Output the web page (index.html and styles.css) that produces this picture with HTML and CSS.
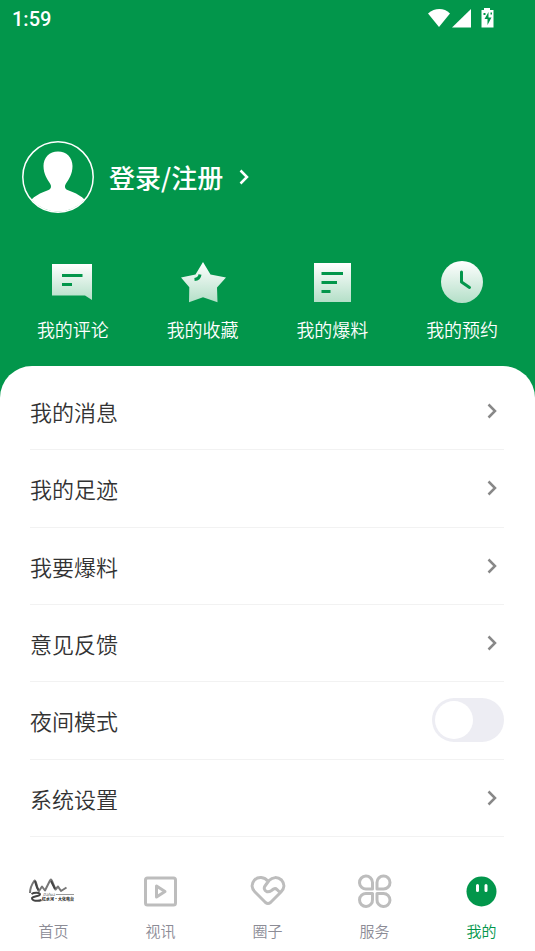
FILE: index.html
```html
<!DOCTYPE html>
<html lang="zh-CN">
<head>
<meta charset="utf-8">
<meta name="viewport" content="width=device-width, initial-scale=1">
<title>我的</title>
<link rel="stylesheet" href="styles.css">
</head>
<body>
<header class="hero">
  <div class="status">
    <time class="clock">1:59</time>
    <svg class="signals" viewBox="0 0 68 22" aria-hidden="true">
      <path d="M0 5.500C7-.4 16-.4 22 5.500L11 19z"/>
      <path d="M43 1V19.500H24z"/>
      <path d="M56 0h6v2h3.500v17.500h-12V2h2.500z"/>
      <path class="bolt" d="M60.500 4l-4 7h3v6l4-7.500h-3zM55.500 5h2v2h-2zM62.500 4.500h1.500v2h-1.500z"/>
    </svg>
  </div>
  <a class="profile" href="#login">
    <svg class="avatar" viewBox="0 0 72 72" aria-hidden="true">
      <circle class="ring" cx="36" cy="36" r="35.200"/>
      <path d="M36 10.500c8.500 0 14.500 6 14.500 14.500 0 8-3.500 13-6.500 17.500-1.500 2.500-1.500 5 1.500 6.500l5 2c5 2 9 4.500 12 7.500A35 35 0 0 1 9.500 58.500c3-3 7-5.500 12-7.500l5-2c3-1.500 3-4 1.500-6.500-3-4.500-6.500-9.500-6.500-17.500 0-8.500 6-14.500 14.500-14.500z"/>
    </svg>
    <span class="login">登录/注册</span>
    <svg class="chevron" viewBox="0 0 10 16" aria-hidden="true"><path d="M1.500 1.500 8 8l-6.500 6.500"/></svg>
  </a>
  <nav class="shortcuts" aria-label="快捷入口">
    <a href="#comments">
      <svg viewBox="0 0 46 46" aria-hidden="true">
        <defs><linearGradient id="fade" x1="0" y1="0" x2="0" y2="1"><stop offset="0" stop-color="#fff"/><stop offset="1" stop-color="#b4dfc8"/></linearGradient></defs>
        <path fill="url(#fade)" d="M2 5h40v36l-7-4.500h-33z"/>
        <path class="mark" d="M12 16.500h20.500M12 25.500h10"/>
      </svg>
      我的评论
    </a>
    <a href="#favorites">
      <svg viewBox="0 0 46 46" aria-hidden="true">
        <path fill="url(#fade)" d="M23 3l7.500 12.500L46 18.500l-9 10 .5 14.800-14.500-5-14 5 .3-15L1 18.500l14.500-3z"/>
        <path class="mark" d="M14.500 20.500q5-.5 5.500-5"/>
      </svg>
      我的收藏
    </a>
    <a href="#tips">
      <svg viewBox="0 0 46 46" aria-hidden="true">
        <path fill="url(#fade)" d="M5 4h37v39H5z"/>
        <path class="mark" d="M12.500 14.500h21.500M12.500 23.500h15.500M12.500 32.500h9"/>
      </svg>
      我的爆料
    </a>
    <a href="#bookings">
      <svg viewBox="0 0 46 46" aria-hidden="true">
        <circle fill="url(#fade)" cx="23" cy="23" r="21"/>
        <path class="mark" stroke-linecap="round" stroke-linejoin="round" d="M22.500 13v10l8 5.500"/>
      </svg>
      我的预约
    </a>
  </nav>
</header>
<main class="panel">
  <ul class="menu">
    <li><a class="row" href="#messages">我的消息<svg class="chevron" viewBox="0 0 10 16" aria-hidden="true"><path d="M1.500 1.500 8 8l-6.500 6.500"/></svg></a></li>
    <li><a class="row" href="#history">我的足迹<svg class="chevron" viewBox="0 0 10 16" aria-hidden="true"><path d="M1.500 1.500 8 8l-6.500 6.500"/></svg></a></li>
    <li><a class="row" href="#report">我要爆料<svg class="chevron" viewBox="0 0 10 16" aria-hidden="true"><path d="M1.500 1.500 8 8l-6.500 6.500"/></svg></a></li>
    <li><a class="row" href="#feedback">意见反馈<svg class="chevron" viewBox="0 0 10 16" aria-hidden="true"><path d="M1.500 1.500 8 8l-6.500 6.500"/></svg></a></li>
    <li><label class="row" for="night">夜间模式<input class="switch" type="checkbox" role="switch" id="night"></label></li>
    <li><a class="row" href="#settings">系统设置<svg class="chevron" viewBox="0 0 10 16" aria-hidden="true"><path d="M1.500 1.500 8 8l-6.500 6.500"/></svg></a></li>
  </ul>
</main>
<nav class="tabs" aria-label="主导航">
  <a href="#home">
    <svg class="logo" viewBox="0 0 48 36" aria-hidden="true">
      <path class="ridge" d="M0 20C0 14 2 11 4.500 7.500c2.500 1 2 8 4.500 10.500l3-4.500 3 4L20 7.500c1-1.500 1.500-1 2 .5l3.500 8.500 2.500-3 3 4.500 5.500-3.500"/>
      <path class="ridge-shade" d="M5 8c1 3 1.500 7 3.500 9M21 8l4 8"/>
      <path class="river" d="M1.500 21c3-2 9-1.500 8.500.5-.5 2-7 1.500-8 3.500-.5 3 6 3.500 9.500 2"/>
      <path class="rule" d="M26 21.500h18"/>
      <text x="13" y="23" class="script">Dahua</text>
      <text x="12" y="28" class="name">红水河·大化电台</text>
    </svg>
    首页
  </a>
  <a href="#video">
    <svg viewBox="0 0 36 36" aria-hidden="true"><rect x="2.500" y="5" width="30" height="27" rx="2"/><path d="M13.500 13v11l8.500-5.500z"/></svg>
    视讯
  </a>
  <a href="#circle">
    <svg viewBox="0 0 36 36" aria-hidden="true"><path d="M18 8.500C14.500 3.500 8 3.500 4.500 7c-3.500 4-3 8.500.5 12l10.500 10.500q2.500 2 5 0L31 19c3.500-3.500 4-8 .5-12-4-3.500-9-3-12.500.5l-4 5.500c-1.500 2-.5 4.500 1.500 5.500 2 .8 3.500 0 5-1l2-1.500q2-1 3.500.5l2.500 2.500"/></svg>
    圈子
  </a>
  <a href="#services">
    <svg viewBox="0 0 36 36" aria-hidden="true"><path d="M15.500 16H9.500A6.500 6.500 0 1 1 15.500 9.500zM20 16V9.500A6.500 6.500 0 1 1 26.500 16zM15.500 20.500v6A6.500 6.500 0 1 1 9.500 20.500zM20 20.500h6.500A6.500 6.500 0 1 1 20 26.500z"/></svg>
    服务
  </a>
  <a class="active" href="#me" aria-current="page">
    <svg viewBox="0 0 36 36" aria-hidden="true"><circle class="face" cx="17.500" cy="18.500" r="15"/><path class="eyes" d="M13.500 12.500v5M22 12.500v5"/></svg>
    我的
  </a>
</nav>
</body>
</html>
```
FILE: styles.css
```css
:root {
  --green: #02964b;
  --ink: #333;
}

* {
  box-sizing: border-box;
}

body {
  display: flex;
  flex-direction: column;
  min-height: 100vh;
  margin: 0;
  background: #fff;
  color: var(--ink);
  font-family: "Noto Sans CJK SC", sans-serif;
  font-weight: 350;
}

a {
  color: inherit;
  text-decoration: none;
}

svg {
  flex: none;
  overflow: visible;
}

.hero {
  padding-bottom: 56px;
  background: var(--green);
  color: #fff;
}

.status {
  display: flex;
  justify-content: space-between;
  align-items: center;
  height: 38px;
  padding: 0 39px 0 12px;
}

.clock {
  font: 500 20px/24px Roboto, sans-serif;
}

.signals {
  width: 68px;
  height: 22px;
  fill: #fff;
}

.signals .bolt {
  fill: var(--green);
}

.profile {
  display: flex;
  align-items: center;
  margin-top: 103px;
  padding: 0 22px;
}

.avatar {
  width: 72px;
  height: 72px;
  fill: #fff;
}

.ring {
  fill: none;
  stroke: #fff;
  stroke-width: 1.5;
}

.login {
  margin: 0 16px 0 15px;
  font-size: 26px;
  font-weight: 500;
  line-height: 40px;
}

.chevron {
  width: 10px;
  height: 16px;
  fill: none;
  stroke: currentColor;
  stroke-width: 2.5;
}

.shortcuts {
  display: grid;
  grid-template-columns: repeat(4, 1fr);
  margin-top: 46px;
  padding: 0 8px;
}

.shortcuts a {
  display: flex;
  flex-direction: column;
  align-items: center;
  gap: 11px;
  font-size: 18px;
  line-height: 26px;
}

.shortcuts svg {
  width: 46px;
  height: 46px;
}

.mark {
  fill: none;
  stroke: var(--green);
  stroke-width: 3;
}

.panel {
  display: flex;
  flex: 1;
  margin-top: -32px;
  padding: 7px 31px 0 30px;
  border-radius: 32px 32px 0 0;
  background: #fff;
}

.menu {
  display: grid;
  flex: 1;
  grid-auto-rows: 1fr;
  margin: 0;
  padding: 0;
  list-style: none;
}

.menu li {
  display: flex;
  border-bottom: 1px solid #f2f2f2;
}

.row {
  display: flex;
  flex: 1;
  justify-content: space-between;
  align-items: center;
  min-height: 64px;
  font-size: 22px;
  line-height: 32px;
}

.row .chevron {
  margin-right: 7px;
  color: #888;
}

.switch {
  display: flex;
  align-items: center;
  width: 72px;
  height: 44px;
  margin: 0;
  padding: 3px;
  border-radius: 22px;
  background: #ededf3;
  appearance: none;
}

.switch::before {
  width: 38px;
  height: 38px;
  border-radius: 50%;
  background: #fff;
  content: "";
}

.switch:checked {
  justify-content: flex-end;
  background: var(--green);
}

.tabs {
  display: grid;
  grid-template-columns: repeat(5, 1fr);
  height: 114px;
  padding-top: 36px;
  color: #8c8c96;
}

.tabs a {
  display: flex;
  flex-direction: column;
  align-items: center;
  gap: 11px;
  font-size: 15px;
  line-height: 22px;
}

.tabs svg {
  width: 36px;
  height: 36px;
  fill: none;
  stroke: #bdbdbd;
  stroke-width: 3;
  stroke-linejoin: round;
}

.tabs .logo {
  width: 48px;
}

.logo .ridge {
  stroke: #777;
  stroke-width: 2;
}

.logo .ridge-shade {
  stroke: #444;
  stroke-width: 2;
}

.logo .river {
  stroke: #444;
  stroke-width: 2;
}

.logo .rule {
  stroke: #999;
  stroke-width: 1;
}

.logo text {
  fill: #333;
  stroke: none;
}

.logo .script {
  font-size: 4px;
  font-style: italic;
}

.logo .name {
  font-size: 4px;
  font-weight: 900;
}

.tabs .active {
  color: var(--green);
}

.tabs .face {
  fill: var(--green);
  stroke: none;
}

.tabs .eyes {
  stroke: #fff;
  stroke-linecap: round;
}
```
